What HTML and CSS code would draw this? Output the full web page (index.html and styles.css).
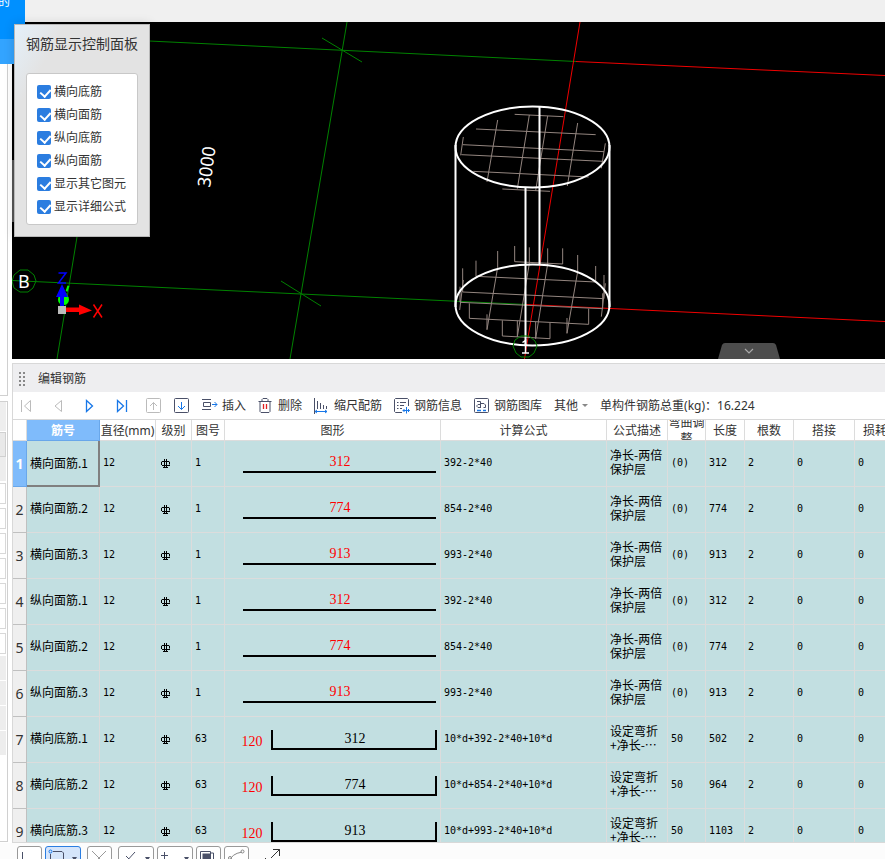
FILE: index.html
```html
<!DOCTYPE html>
<html lang="zh-CN">
<head>
  <meta charset="UTF-8" />
  <meta name="viewport" content="width=device-width, initial-scale=1" />
  <title>编辑钢筋</title>
  <link rel="stylesheet" href="styles.css">
</head>
<body>
  <!-- shared symbols -->
  <svg class="defs" aria-hidden="true">
    <symbol id="grade" viewBox="0 0 10 9">
      <path d="M3.500 0V9M5.500 0V9M1 6.500H9M.5 6V3L1 2.500H8L8.500 3V5.500M2 8.500H7M0 4.500H1" fill="none" stroke="#000"/>
    </symbol>
  </svg>

  <div class="tab"><div class="tab-name">的</div><div class="tab-sub"></div></div>

  <div class="app">
    <div class="topbar"></div>

    <!-- left property list, mostly scrolled out -->
    <div class="side">
      <div class="side-panel side-tree"></div>
      <div class="side-panel side-props">
        <div class="side-title"></div>
        <div class="side-head"></div>
        <div class="side-row"></div>
        <div class="side-fields">
          <div class="side-field"></div>
          <div class="side-field"></div>
          <div class="side-field"></div>
          <div class="side-field"></div>
          <div class="side-field"></div>
          <div class="side-field"></div>
          <div class="side-field"></div>
        </div>
        <div class="side-row"></div>
        <div class="side-row"></div>
        <div class="side-row"></div>
        <div class="side-row"></div>
      </div>
    </div>

    <div class="main">
      <!-- 3D view -->
      <div class="view">
        <svg class="scene" viewBox="12 22 873 337" preserveAspectRatio="xMinYMin slice">
          <rect x="12" y="160" width="3" height="62" fill="#555"/>
          <g stroke="#008200" fill="none">
            <path d="M149 41L576 61.500M347 22L290 359M77 237L57 359M12 280.500L526 304.500"/>
            <path d="M322 38L362 62M281 281L321 306"/>
            <path d="M20 270L28 270L34 275L36 281L33 288L28 292L20 292L14 288L12 281L14 275Z"/>
          </g>
          <g stroke="#f00000" fill="none">
            <path d="M576 61.500L885 75.500M580 22L524.500 359M526 304.500L885 321.500"/>
          </g>
          <g transform="translate(430 80) scale(.33333)" stroke="#94867f" stroke-width="3" fill="none">
            <path d="M254 103L400 110M138 147L497 164M98 194L522 215M94 224L520 244M130 274L476 291M217 327L360 334"/>
            <path d="M203 120L171 306M298 105L262 326M353 108L317 332M443 129L412 318M100 171L92 226M526 190L514 265"/>
            <path d="M254 498V545L398 552V505M138 542V589L497 606V558M98 565V636L522 656V585M90 620V667L518 686V640M118 670V715L476 733V686M217 721V768L360 776V728"/>
            <path d="M203 513V562L171 749V703M298 502V550L262 770V722M353 505V552L317 776V726M443 525V575L411 760V714M100 600L89 690M526 610L514 710"/>
          </g>
          <g stroke="#fff" stroke-width="2" fill="none">
            <ellipse cx="532.500" cy="147" rx="77" ry="40.500"/>
            <ellipse cx="532.500" cy="305" rx="77" ry="40.500"/>
            <path d="M455.500 145V307M609.500 145V307M539.500 107V264M525.500 188V345"/>
          </g>
          <path d="M521 336L529 336L535 341L537 346L534 353L529 357L521 357L516 353L513 346L515 340Z" stroke="#008200" fill="none"/>
          <path d="M522.500 342.500L525.500 340.500V352.500M522 353H529" stroke="#fff" stroke-width="1.500" fill="none"/>
          <text class="label" x="210" y="188" transform="rotate(-82 210 188)">3000</text>
          <text class="label" x="18" y="288">B</text>
          <!-- axis gizmo -->
          <path d="M64 299L69 284" stroke="#0f0" stroke-width="2" stroke-dasharray="6 2"/>
          <circle cx="63.500" cy="299.500" r="5.500" fill="#0f0"/>
          <path d="M60 307V297H56L62 284L68 297H64V307Z" fill="#00f"/>
          <path d="M66 307.500H79V304.500L92 310.500L79 315V312H66Z" fill="#f00"/>
          <rect x="58" y="306" width="8" height="8" fill="#bbb"/>
          <path d="M58.500 273H66L58.500 283H66" stroke="#00f" stroke-width="1.500" fill="none"/>
          <path d="M93.500 304.500L102 317.500M102 304.500L93.500 317.500" stroke="#f00" stroke-width="1.500"/>
        </svg>
        <button class="view-toggle" aria-label="收起">
          <svg width="62" height="16" viewBox="0 0 62 16"><path d="M0 16L4 2Q5 0 7 0H55Q57 0 58 2L62 16Z" fill="#4d4d4d"/><path d="M27 6L31 10L35 6" fill="none" stroke="#aaa" stroke-width="1.200"/></svg>
        </button>
      </div>

      <!-- rebar editor -->
      <div class="editor">
        <div class="editor-title">
          <svg width="6" height="14" viewBox="0 0 6 14" fill="#888"><path d="M0 0h2v2h-2zM4 0h2v2h-2zM0 4h2v2h-2zM4 4h2v2h-2zM0 8h2v2h-2zM4 8h2v2h-2zM0 12h2v2h-2zM4 12h2v2h-2z"/></svg>
          <span>编辑钢筋</span>
        </div>

        <div class="toolbar">
          <button class="nav" aria-label="第一个"><svg width="16" height="16" viewBox="0 0 16 16" fill="none" stroke="#bbb"><path d="M3.500 2V14M12.500 2.500V13.500L6.500 8Z"/></svg></button>
          <button class="nav" aria-label="上一个"><svg width="16" height="16" viewBox="0 0 16 16" fill="none" stroke="#bbb"><path d="M11.500 2.500V13.500L5 8Z"/></svg></button>
          <button class="nav" aria-label="下一个"><svg width="16" height="16" viewBox="0 0 16 16" fill="none" stroke="#1777e8" stroke-width="1.300"><path d="M4.500 2.500V13.500L10.500 8Z"/></svg></button>
          <button class="nav" aria-label="最后一个"><svg width="16" height="16" viewBox="0 0 16 16" fill="none" stroke="#1777e8" stroke-width="1.300"><path d="M3.500 2.500V13.500L9.500 8ZM12.500 2V14"/></svg></button>
          <button aria-label="上移"><svg width="16" height="16" viewBox="0 0 16 16" fill="none" stroke="#bbb"><rect x=".5" y=".5" width="14" height="14" rx="1"/><path d="M7.500 12V4.500M4 8L7.500 4.500L11 8"/></svg></button>
          <button aria-label="下移"><svg width="16" height="16" viewBox="0 0 16 16" fill="none" stroke="#4a5068"><rect x=".5" y=".5" width="14" height="14" rx="1"/><path d="M7.500 4V11.500M4 8L7.500 11.500L11 8" stroke="#1777e8"/></svg></button>
          <button><svg width="16" height="16" viewBox="0 0 16 16" fill="none" stroke="#4a5068"><path d="M0 1.500H9M1.500 4.500H8.500V8.500H1.500ZM0 11.500H9"/><path d="M10 6.500H15M12.500 4L15 6.500L12.500 9" stroke="#1777e8"/></svg>插入</button>
          <button><svg width="16" height="16" viewBox="0 0 16 16" fill="none" stroke="#4a5068"><path d="M.5 3.500H13.500M4 3V1.500L5 .5H9L10 1.500V3M2 3.500V13.500L3 14.500H11L12 13.500V3.500"/><path d="M5.500 6V11M8.500 6V11" stroke="#e02020" stroke-width="1.300"/></svg>删除</button>
          <button><svg width="16" height="16" viewBox="0 0 16 16" fill="none" stroke="#4a5068"><path d="M.5 0V16M3.500 3V11M6.500 5V11M9.500 7V11M12.500 8V11"/><path d="M1 13.500H13M3 12L1 13.500L3 15M11 12L13 13.500L11 15" stroke="#1777e8"/></svg>缩尺配筋</button>
          <button><svg width="16" height="16" viewBox="0 0 16 16" fill="none" stroke="#4a5068"><path d="M8 14.500H1.500L.5 13.500V1.500L1.500 .5H13.500L14.500 1.500V8M3 4.500H4.500M6 4.500H12M3 7.500H4.500M6 7.500H10M3 10.500H4.500M6 10.500H8"/><path d="M12.500 9V15.500M9 12.500H15.500M10.500 11L9 12.500L10.500 14M14 11L15.500 12.500L14 14" stroke="#1777e8"/></svg>钢筋信息</button>
          <button><svg width="16" height="16" viewBox="0 0 16 16" fill="none" stroke="#4a5068"><rect x=".5" y=".5" width="14" height="14" rx="1"/><path d="M3 3.500H6.500V10M6.500 6.500H4L3 7.500V8.500L4 9.500H6.500M6.500 5.500H10L11.500 7V9.500H9.500"/><path d="M3 12.500H7M9 12.500H12" stroke="#1777e8" stroke-width="1.300"/></svg>钢筋图库</button>
          <button>其他<svg class="caret" width="6" height="4" viewBox="0 0 6 4"><path d="M0 0H6L3 3Z" fill="#888"/></svg></button>
          <span class="weight">单构件钢筋总重(kg)：16.224</span>
        </div>

        <div class="table-wrap">
          <table>
            <colgroup>
              <col class="c-no"><col class="c-name"><col class="c-dia"><col class="c-grade"><col class="c-fig"><col class="c-shape"><col class="c-formula"><col class="c-desc"><col class="c-adj"><col class="c-len"><col class="c-count"><col class="c-lap"><col class="c-loss">
            </colgroup>
            <thead>
              <tr>
                <th></th><th class="on">筋号</th><th>直径(mm)</th><th>级别</th><th>图号</th><th>图形</th><th>计算公式</th><th>公式描述</th><th class="wrap"><div class="two-line">弯曲调整</div></th><th>长度</th><th>根数</th><th>搭接</th><th>损耗</th>
              </tr>
            </thead>
            <tbody>
              <tr>
                <th class="on">1</th><td class="name current">横向面筋.1</td><td>12</td><td class="grade"><svg width="10" height="9"><use href="#grade"/></svg></td><td>1</td>
                <td class="shape"><svg width="215" height="45"><path d="M18 31H211"/><text class="red" x="115" y="25">312</text></svg></td>
                <td>392-2*40</td><td class="desc">净长-两倍<br>保护层</td><td>(0)</td><td>312</td><td>2</td><td>0</td><td>0</td>
              </tr>
              <tr>
                <th>2</th><td class="name">横向面筋.2</td><td>12</td><td class="grade"><svg width="10" height="9"><use href="#grade"/></svg></td><td>1</td>
                <td class="shape"><svg width="215" height="45"><path d="M18 31H211"/><text class="red" x="115" y="25">774</text></svg></td>
                <td>854-2*40</td><td class="desc">净长-两倍<br>保护层</td><td>(0)</td><td>774</td><td>2</td><td>0</td><td>0</td>
              </tr>
              <tr>
                <th>3</th><td class="name">横向面筋.3</td><td>12</td><td class="grade"><svg width="10" height="9"><use href="#grade"/></svg></td><td>1</td>
                <td class="shape"><svg width="215" height="45"><path d="M18 31H211"/><text class="red" x="115" y="25">913</text></svg></td>
                <td>993-2*40</td><td class="desc">净长-两倍<br>保护层</td><td>(0)</td><td>913</td><td>2</td><td>0</td><td>0</td>
              </tr>
              <tr>
                <th>4</th><td class="name">纵向面筋.1</td><td>12</td><td class="grade"><svg width="10" height="9"><use href="#grade"/></svg></td><td>1</td>
                <td class="shape"><svg width="215" height="45"><path d="M18 31H211"/><text class="red" x="115" y="25">312</text></svg></td>
                <td>392-2*40</td><td class="desc">净长-两倍<br>保护层</td><td>(0)</td><td>312</td><td>2</td><td>0</td><td>0</td>
              </tr>
              <tr>
                <th>5</th><td class="name">纵向面筋.2</td><td>12</td><td class="grade"><svg width="10" height="9"><use href="#grade"/></svg></td><td>1</td>
                <td class="shape"><svg width="215" height="45"><path d="M18 31H211"/><text class="red" x="115" y="25">774</text></svg></td>
                <td>854-2*40</td><td class="desc">净长-两倍<br>保护层</td><td>(0)</td><td>774</td><td>2</td><td>0</td><td>0</td>
              </tr>
              <tr>
                <th>6</th><td class="name">纵向面筋.3</td><td>12</td><td class="grade"><svg width="10" height="9"><use href="#grade"/></svg></td><td>1</td>
                <td class="shape"><svg width="215" height="45"><path d="M18 31H211"/><text class="red" x="115" y="25">913</text></svg></td>
                <td>993-2*40</td><td class="desc">净长-两倍<br>保护层</td><td>(0)</td><td>913</td><td>2</td><td>0</td><td>0</td>
              </tr>
              <tr>
                <th>7</th><td class="name">横向底筋.1</td><td>12</td><td class="grade"><svg width="10" height="9"><use href="#grade"/></svg></td><td>63</td>
                <td class="shape"><svg width="215" height="45"><path d="M47 13V32H211V13"/><text class="red" x="27" y="29">120</text><text x="130" y="26">312</text></svg></td>
                <td>10*d+392-2*40+10*d</td><td class="desc">设定弯折<br>+净长-⋯</td><td>50</td><td>502</td><td>2</td><td>0</td><td>0</td>
              </tr>
              <tr>
                <th>8</th><td class="name">横向底筋.2</td><td>12</td><td class="grade"><svg width="10" height="9"><use href="#grade"/></svg></td><td>63</td>
                <td class="shape"><svg width="215" height="45"><path d="M47 13V32H211V13"/><text class="red" x="27" y="29">120</text><text x="130" y="26">774</text></svg></td>
                <td>10*d+854-2*40+10*d</td><td class="desc">设定弯折<br>+净长-⋯</td><td>50</td><td>964</td><td>2</td><td>0</td><td>0</td>
              </tr>
              <tr>
                <th>9</th><td class="name">横向底筋.3</td><td>12</td><td class="grade"><svg width="10" height="9"><use href="#grade"/></svg></td><td>63</td>
                <td class="shape"><svg width="215" height="45"><path d="M47 13V32H211V13"/><text class="red" x="27" y="29">120</text><text x="130" y="26">913</text></svg></td>
                <td>10*d+993-2*40+10*d</td><td class="desc">设定弯折<br>+净长-⋯</td><td>50</td><td>1103</td><td>2</td><td>0</td><td>0</td>
              </tr>
            </tbody>
          </table>
        </div>
      </div>
    </div>

    <div class="statusbar">
      <button class="tool" aria-label="正交"><svg width="23" height="22" viewBox="0 0 23 22" fill="none" stroke="#4a5068"><path d="M4.500 5V16H18"/></svg></button>
      <button class="tool wide active" aria-label="对象捕捉"><svg width="34" height="22" viewBox="0 0 34 22" fill="none" stroke="#4a5068"><path d="M7 4.500H16L17.500 6V17M4.500 7V17"/><circle cx="4.500" cy="4.500" r="1.500" stroke="#1777e8"/><path d="M26 10H31L28.500 14Z" fill="#4a5068" stroke="none"/></svg></button>
      <button class="tool gap-left" aria-label="交点"><svg width="23" height="22" viewBox="0 0 23 22" fill="none" stroke="#999"><path d="M4 4L18 18M18 4L4 18"/></svg></button>
      <button class="tool wide gap-left" aria-label="垂点"><svg width="34" height="22" viewBox="0 0 34 22" fill="none" stroke="#4a5068"><path d="M16 5L6 16M7 9L10 12"/><path d="M26 10H31L28.500 14Z" fill="#4a5068" stroke="none"/></svg></button>
      <button class="tool wide" aria-label="偏移"><svg width="34" height="22" viewBox="0 0 34 22" fill="none" stroke="#4a5068"><path d="M6.500 5V12M3 8.500H10"/><path d="M26 10H31L28.500 14Z" fill="#4a5068" stroke="none"/></svg></button>
      <button class="tool" aria-label="图层"><svg width="23" height="22" viewBox="0 0 23 22" fill="none" stroke="#4a5068"><path d="M3.500 16V4.500H13.500V16M14 6H16.500V16"/><rect x="6" y="7" width="7" height="9" fill="#4a5068"/></svg></button>
      <button class="tool" aria-label="弧线"><svg width="23" height="22" viewBox="0 0 23 22" fill="none" stroke="#888"><path d="M5 14Q6 7 17 5"/><circle cx="5" cy="11" r="1.500"/><circle cx="17.500" cy="4.500" r="1.500"/></svg></button>
      <button class="tool plain" aria-label="全屏"><svg width="17" height="22" viewBox="0 0 17 22" fill="none" stroke="#333"><path d="M7 11L15.500 2.500M9 2.500H15.500V9M1 11L5 15"/></svg></button>
    </div>
  </div>

  <!-- floating display options -->
  <div class="float-panel">
    <div class="float-title">钢筋显示控制面板</div>
    <div class="float-list">
      <label><input type="checkbox" checked>横向底筋</label>
      <label><input type="checkbox" checked>横向面筋</label>
      <label><input type="checkbox" checked>纵向底筋</label>
      <label><input type="checkbox" checked>纵向面筋</label>
      <label><input type="checkbox" checked>显示其它图元</label>
      <label><input type="checkbox" checked>显示详细公式</label>
    </div>
  </div>
</body>
</html>
```
FILE: styles.css
```css
* {
  box-sizing: border-box;
}
body {
  margin: 0;
  font-family: "Noto Sans", "Noto Sans CJK SC", sans-serif;
  font-size: 12px;
  line-height: 16px;
  color: #333;
  background: #fff;
  overflow: hidden;
}
button {
  border: none;
  background: none;
  padding: 0;
  font: inherit;
  color: inherit;
  cursor: pointer;
}
svg {
  display: block;
  flex: none;
}
.defs {
  position: absolute;
  width: 0;
  height: 0;
}
.app {
  display: grid;
  grid-template-columns: 12px minmax(0, 1fr);
  grid-template-rows: 22px minmax(0, 1fr) 16px;
  height: 100vh;
}
.topbar {
  grid-column: 1 / 3;
  background: #f0f0f0;
}

/* blue ribbon tab over the corner */
.tab {
  position: absolute;
  left: 0;
  top: 0;
  width: 25px;
  z-index: 1;
  overflow: hidden;
}
.tab-name {
  height: 39px;
  background: #0090ff;
  color: #fff;
  line-height: 4px;
  text-indent: -2px;
}
.tab-sub {
  height: 25px;
  width: 14px;
  background: #33a4ff;
}

/* left strip */
.side {
  display: flex;
  flex-direction: column;
  gap: 5px;
  padding: 0 4px 1px 0;
}
.side-panel {
  border: 1px solid #d0d0d0;
  border-left: none;
  background: #fff;
}
.side-tree {
  height: 374px;
}
.side-props {
  flex: 1;
  overflow: hidden;
  padding-right: 1px;
}
.side-title {
  height: 29px;
  background: #eee;
}
.side-head {
  height: 25px;
  margin-top: 1px;
  background: #e9e9e9;
  border: 1px solid #d0d0d0;
  border-left: none;
}
.side-row {
  height: 24px;
  margin-bottom: 1px;
  background: #ededed;
}
.side-fields {
  display: flex;
  flex-direction: column;
  gap: 4px;
  padding: 1px 0 2px;
}
.side-field {
  height: 21px;
  border: 1px solid #d8d8d8;
  border-left: none;
}

.main {
  display: flex;
  flex-direction: column;
  gap: 4px;
  min-width: 0;
}

/* 3D view */
.view {
  position: relative;
  flex: none;
  height: 337px;
  background: #000;
  overflow: hidden;
}
.scene {
  width: 100%;
  height: 100%;
}
.label {
  fill: #fff;
  font-size: 18px;
}
.view-toggle {
  position: absolute;
  right: 105px;
  bottom: 0;
}

/* editor */
.editor {
  flex: 1;
  min-height: 0;
  display: flex;
  flex-direction: column;
  border: 1px solid #d8d8d8;
  border-right: none;
}
.editor-title {
  flex: none;
  display: flex;
  align-items: center;
  gap: 13px;
  height: 28px;
  padding: 1px 0 0 6px;
  background: #eeeef0;
}
.toolbar {
  flex: none;
  display: flex;
  align-items: center;
  gap: 12px;
  height: 28px;
  padding: 1px 0 0 5px;
  border-bottom: 1px solid #d8d8d8;
  white-space: nowrap;
}
.toolbar button {
  display: flex;
  align-items: center;
  gap: 4px;
}
.toolbar .nav {
  margin-right: 4px;
}

/* rebar table */
.table-wrap {
  flex: 1;
  min-height: 0;
  overflow: hidden;
}
table {
  width: 883px;
  table-layout: fixed;
  border-collapse: separate;
  border-spacing: 0;
}
.c-no { width: 14px; }
.c-name { width: 73px; }
.c-dia { width: 56px; }
.c-grade { width: 36px; }
.c-fig { width: 33px; }
.c-shape { width: 216px; }
.c-formula { width: 166px; }
.c-desc { width: 61px; }
.c-adj { width: 38px; }
.c-len { width: 39px; }
.c-count { width: 49px; }
.c-lap { width: 61px; }
.c-loss { width: 41px; }
th, td {
  padding: 0;
  border-right: 1px solid #dcdcdc;
  border-bottom: 1px solid #dcdcdc;
}
th {
  font-weight: normal;
  white-space: nowrap;
}
thead th {
  height: 21px;
  padding-top: 2px;
}
thead .wrap {
  padding-top: 0;
}
.two-line {
  display: flex;
  align-items: center;
  height: 20px;
  padding-top: 2px;
  overflow: hidden;
  white-space: normal;
}
tbody th {
  height: 46px;
  padding-top: 1px;
  font-size: 14px;
  background: #efefef;
  border-color: #c0c0c0;
}
th.on {
  background: #7fbbfb;
  border-color: #69a7ea;
  color: #fff;
  font-weight: bold;
}
td {
  padding: 0 0 1px 3px;
  background: #c2dfe1;
  color: #000;
  font-family: "DejaVu Sans Mono", "Noto Sans CJK SC", monospace;
  font-size: 10px;
  white-space: nowrap;
}
td.name,
td.desc {
  padding-bottom: 3px;
  font-family: "Noto Sans CJK SC", sans-serif;
  font-size: 12px;
}
td.desc {
  line-height: 14px;
}
td.current {
  padding-bottom: 0;
  border-right: 2px solid #808080;
  border-bottom: 2px solid #808080;
}
td.grade {
  padding: 0 0 0 5px;
}
td.shape {
  padding: 0;
}
.shape path {
  fill: none;
  stroke: #000;
  stroke-width: 2;
}
.shape text {
  font-family: "Liberation Serif", serif;
  font-size: 14px;
  text-anchor: middle;
}
.shape .red {
  fill: #f00;
}

/* bottom tool buttons */
.statusbar {
  grid-column: 1 / 3;
  display: flex;
  gap: 3px;
  padding: 3px 0 0 17px;
  background: #fcfcfc;
  overflow: hidden;
}
.tool {
  flex: none;
  width: 25px;
  height: 24px;
  border: 1px solid #999;
  border-radius: 3px;
  background: #fff;
}
.tool.wide {
  width: 36px;
}
.tool.gap-left {
  margin-left: 3px;
}
.tool.active {
  border-color: #2a7de1;
  background: #d5e5fb;
}
.tool.plain {
  margin-left: 12px;
  border: none;
  background: none;
}

/* floating panel */
.float-panel {
  position: absolute;
  left: 14px;
  top: 24px;
  z-index: 2;
  padding: 11px;
  border: 1px solid #b8b8b8;
  background: linear-gradient(120deg, #e4f0fa 0, #e3e3e3 20%);
  box-shadow: 0 0 10px rgba(0, 0, 0, 0.15);
}
.float-title {
  height: 37px;
  font-size: 14px;
}
.float-list {
  display: flex;
  flex-direction: column;
  gap: 7px;
  padding: 10px 9px 9px 10px;
  border: 1px solid #c8c8c8;
  border-radius: 3px;
  background: #fff;
}
.float-list label {
  display: flex;
  align-items: center;
  gap: 3px;
}
.float-list input {
  appearance: none;
  position: relative;
  width: 14px;
  height: 14px;
  margin: 0;
  border-radius: 2px;
  background: #2b7de0;
}
.float-list input:checked::after {
  content: "";
  position: absolute;
  left: 5px;
  top: 2px;
  width: 5px;
  height: 8px;
  border: solid #fff;
  border-width: 0 2px 2px 0;
  transform: rotate(42deg);
}
```
